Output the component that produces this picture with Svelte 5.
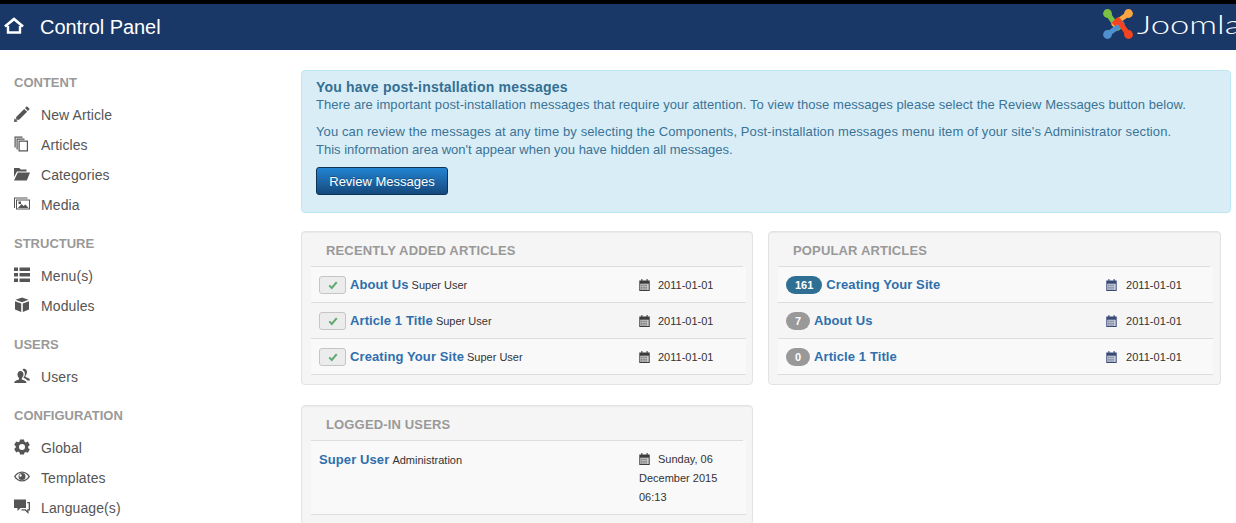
<script lang="ts">
  const recent = [
    { title: 'About Us', date: '2011-01-01' },
    { title: 'Article 1 Title', date: '2011-01-01' },
    { title: 'Creating Your Site', date: '2011-01-01' }
  ];

  const popular = [
    { hits: 161, title: 'Creating Your Site', date: '2011-01-01', hot: true },
    { hits: 7, title: 'About Us', date: '2011-01-01', hot: false },
    { hits: 0, title: 'Article 1 Title', date: '2011-01-01', hot: false }
  ];

  const menu = [
    {
      heading: 'CONTENT',
      items: [
        { label: 'New Article', icon: 'pencil' },
        { label: 'Articles', icon: 'copy' },
        { label: 'Categories', icon: 'folder' },
        { label: 'Media', icon: 'image' }
      ]
    },
    {
      heading: 'STRUCTURE',
      items: [
        { label: 'Menu(s)', icon: 'list' },
        { label: 'Modules', icon: 'cube' }
      ]
    },
    {
      heading: 'USERS',
      items: [{ label: 'Users', icon: 'users' }]
    },
    {
      heading: 'CONFIGURATION',
      items: [
        { label: 'Global', icon: 'cog' },
        { label: 'Templates', icon: 'eye' },
        { label: 'Language(s)', icon: 'comments' }
      ]
    }
  ];

  // one link of the logo, rotated four times round the centre
  const logoLinks = [
    { color: '#7ac143', angle: 0 },
    { color: '#f9a541', angle: 90 },
    { color: '#5091cd', angle: 270 },
    { color: '#f44321', angle: 180 }
  ];
</script>

{#snippet calendar(color)}
  <svg class="cal" viewBox="1 0.5 10 11.5" width="11" height="12" fill={color}>
    <path d="M1 2h2V.5h1V2h4V.5h1V2h2v10H1zM2 5v6h8V5z" />
    <path d="M3 6h1v1H3zM5 6h1v1H5zM7 6h1v1H7zM3 8h1v1H3zM5 8h1v1H5zM7 8h1v1H7zM3 9.600h1v1H3zM5 9.600h1v1H5zM7 9.600h1v1H7z" />
    <path d="M2 5h8v6H2z" opacity=".25" />
  </svg>
{/snippet}

{#snippet navIcon(name)}
  <svg class="nav-icon" viewBox="0 0 16 16" width="16" height="16" fill="#555">
    {#if name === 'pencil'}
      <path d="M12.900 0.300l2.800 2.800-1.800 1.900-2.900-2.900zM10.200 2.900l2.900 2.900-8 8-3-.1.100-2.800zM.600 12.200l3.200 3.200-3.900 .6z" />
    {:else if name === 'copy'}
      <path d="M.500.500h8v1.200H1.700v9.800H.500zM2.500 2.500h8v1.200H3.700v9.800H2.500z" />
      <path fill-rule="evenodd" d="M4.500 4.500h9.500v11H4.500zM5.700 5.700v8.600h7.100V5.700z" />
    {:else if name === 'folder'}
      <path d="M0 2h5.500l1 1.500h6V5.500H3L0 11zM3.800 6.500H16l-3.200 8H0z" />
    {:else if name === 'image'}
      <path fill-rule="evenodd" d="M0 1.500h13.500v1H1v9.500H0zM2 3.500h14v10H2zM3 4.500v8h12v-8z" />
      <path d="M4 12l3.500-4 2 2 2-1.500 3 3.500zM4.500 5.500h2.500v2.500H4.500z" />
    {:else if name === 'list'}
      <path d="M0 0.500h4v3.500H0zM5.500 0.500H16v3.500H5.500zM0 6h4v3.500H0zM5.500 6H16v3.500H5.500zM0 11.500h4V15H0zM5.500 11.500H16V15H5.500z" />
    {:else if name === 'cube'}
      <path d="M8 0.500l6.500 2.300L8 5.200 1.500 2.800zM1 4.200l6.200 2.300V15L1 12.500zM15 4.200L8.800 6.500V15L15 12.500z" />
    {:else if name === 'users'}
      <path d="M6.500 3c1.800 0 3 1.400 3 3.200 0 1.500-.7 3-1.700 3.800v1.400c2 .7 4.700 1.200 4.700 3.600H.3c0-2.400 2.700-2.900 4.700-3.600V10C4 9.200 3.500 7.700 3.500 6.200 3.500 4.400 4.700 3 6.500 3z" />
      <path d="M10 .800c1.800 0 3 1.400 3 3.200 0 1.500-.6 2.900-1.500 3.700v1.200c1.800.7 4.500 1.200 4.500 3.600h-2.800c-.8-1.600-2.600-2.200-3.700-2.600v-.4c.9-.9 1.400-2.300 1.400-3.500 0-1.900-.8-3.400-2.300-4.100C8.900 1.100 9.400.800 10 .800z" />
    {:else if name === 'cog'}
      <path fill-rule="evenodd" d="M6 .500h4l.4 2.100 1.400.8 2-.8 2 3.400-1.600 1.400v1.600l1.600 1.400-2 3.400-2-.8-1.400.8L10 15.500H6l-.4-2.100-1.400-.8-2 .8-2-3.400 1.600-1.400V7.200L.200 5.800l2-3.400 2 .8 1.400-.8zM8 5a3 3 0 1 0 0 6 3 3 0 0 0 0-6z" />
    {:else if name === 'eye'}
      <path fill-rule="evenodd" d="M8 2.500c3.500 0 6.500 2.200 8 5-1.500 2.900-4.500 5-8 5s-6.500-2.100-8-5c1.500-2.800 4.500-5 8-5zM8 3.800c-2.700 0-5.100 1.500-6.400 3.700C2.900 9.700 5.300 11.300 8 11.300s5.100-1.600 6.400-3.800C13.100 5.300 10.700 3.800 8 3.800z" />
      <path fill-rule="evenodd" d="M8 4a3.500 3.500 0 1 1 0 7 3.500 3.500 0 0 1 0-7zM6.500 5.300a1.200 1.200 0 1 0 0 2.400 1.200 1.200 0 0 0 0-2.400z" />
    {:else if name === 'comments'}
      <path d="M0 0.500h12v8.500H6.500L3.500 12V9H0z" />
      <path d="M13.200 3H16v8.500h-1.500V15L11 11.500H7.500V10.200h4.200l1.500 1.500V10.200h1.500V4.300h-1.500z" />
    {/if}
  </svg>
{/snippet}

<header class="topbar">
  <div class="title">
    <svg class="home" viewBox="0 0 20 17" width="20" height="17" fill="none" stroke="#fff">
      <path d="M1 9.500 10 2l9 7.500" stroke-width="2.800" />
      <path d="M4 9V15.500H16V9" stroke-width="2.400" />
    </svg>
    <span>Control Panel</span>
  </div>
  <div class="brand">
    <svg viewBox="0 0 30 30" width="30" height="30" fill="none" stroke-width="5.200" stroke-linejoin="round">
      {#each logoLinks as link}
        <g transform="rotate({link.angle} 15 15)" stroke={link.color}>
          <path d="M5 5 15 19 19.500 14.500" />
          <circle cx="4.500" cy="4.500" r="4.400" fill={link.color} stroke="none" />
        </g>
      {/each}
    </svg>
    <span class="wordmark">Joomla</span>
  </div>
</header>

<div class="page">
  <nav class="sidebar">
    {#each menu as group}
      <h4>{group.heading}</h4>
      <ul>
        {#each group.items as item}
          <li>{@render navIcon(item.icon)}<span>{item.label}</span></li>
        {/each}
      </ul>
    {/each}
  </nav>

  <main class="content">
    <section class="alert">
      <h4>You have post-installation messages</h4>
      <p>There are important post-installation messages that require your attention. To view those messages please select the Review Messages button below.</p>
      <p class="second"><span class="wide">You can review the messages at any time by selecting the Components, Post-installation messages menu item of your site's Administrator section.</span><br /><span class="tight">This information area won't appear when you have hidden all messages.</span></p>
      <button>Review Messages</button>
    </section>

    <div class="panels">
      <section class="well">
        <h2>RECENTLY ADDED ARTICLES</h2>
        {#each recent as row}
          <div class="row striped">
            <div class="main">
              <span class="check">
                <svg viewBox="0 0 12 12" width="10" height="10" fill="none" stroke="#62a971" stroke-width="2.400"><path d="M1.500 6.500l3 3 6-7" /></svg>
              </span>
              <a href="#top">{row.title}</a>
              <small>Super User</small>
            </div>
            <div class="date">{@render calendar('#3d3d3d')}<span>{row.date}</span></div>
          </div>
        {/each}
      </section>

      <section class="well">
        <h2>POPULAR ARTICLES</h2>
        {#each popular as row}
          <div class="row striped popular">
            <div class="main">
              <span class="badge" class:hot={row.hot}>{row.hits}</span>
              <a href="#top">{row.title}</a>
            </div>
            <div class="date">{@render calendar('#3a4a78')}<span>{row.date}</span></div>
          </div>
        {/each}
      </section>

      <section class="well">
        <h2>LOGGED-IN USERS</h2>
        <div class="row tall">
          <div class="main">
            <a href="#top">Super User</a>
            <small>Administration</small>
          </div>
          <div class="date wrap">{@render calendar('#3d3d3d')}<span>Sunday, 06 December 2015 06:13</span></div>
        </div>
      </section>
    </div>
  </main>
</div>

<style>
  :global(body) {
    margin: 0;
    background: #fff;
    font-family: "Liberation Sans", Arial, sans-serif;
    font-size: 13px;
    color: #333;
    overflow: hidden;
  }

  /* top bar */
  .topbar {
    height: 46px;
    border-top: 4px solid #000;
    background: #1a3867;
    display: flex;
    justify-content: space-between;
    align-items: center;
    overflow: hidden;
  }

  .title {
    display: flex;
    align-items: center;
    gap: 16px;
    padding-left: 4px;
    color: #fff;
    font-size: 20px;
    letter-spacing: -0.05px;
  }

  .home {
    margin-top: -3px;
  }

  .brand {
    width: 133px;
    margin-bottom: 6px;
    display: flex;
    align-items: center;
    gap: 4px;
    overflow: hidden;
  }

  .brand svg {
    flex: none;
  }

  .wordmark {
    color: #fff;
    font-family: "Lato", sans-serif;
    font-weight: 300;
    font-size: 26px;
    line-height: 1;
    transform: scaleX(1.33);
    transform-origin: left center;
  }

  .page {
    display: grid;
    grid-template-columns: 301px 930px;
    height: 473px;
    overflow: hidden;
  }

  /* sidebar */
  .sidebar {
    padding: 26px 0 0 14px;
  }

  .sidebar h4 {
    margin: 0;
    font-size: 13px;
    line-height: 14px;
    font-weight: 700;
    color: #999;
  }

  .sidebar ul {
    list-style: none;
    margin: 10px 0 17px;
    padding: 0;
  }

  .sidebar li {
    height: 30px;
    display: flex;
    align-items: center;
    gap: 11px;
    font-size: 14px;
    color: #555;
    letter-spacing: 0.1px;
  }

  .nav-icon {
    flex: none;
    margin-top: -3px;
  }

  /* main column */
  .content {
    padding-top: 20px;
  }

  .alert {
    height: 143px;
    box-sizing: border-box;
    padding: 8px 14px;
    background: #d9edf7;
    border: 1px solid #bce8f1;
    border-radius: 4px;
    color: #3a7396;
  }

  .alert h4 {
    margin: 0;
    font-size: 14px;
    line-height: 17px;
    color: #336f92;
    letter-spacing: 0.2px;
  }

  .alert p {
    margin: 0;
    line-height: 18px;
    font-size: 13px;
    letter-spacing: 0.055px;
  }

  .alert .second {
    margin-top: 9px;
  }

  .alert .wide {
    letter-spacing: 0.1px;
  }

  .alert .tight {
    letter-spacing: 0;
  }

  .alert button {
    display: block;
    margin-top: 8px;
    width: 132px;
    height: 28px;
    padding: 0;
    color: #fff;
    font: 13px "Liberation Sans", Arial, sans-serif;
    background: linear-gradient(#2384d3, #15497c);
    border: 1px solid #0e3356;
    border-radius: 3px;
    text-shadow: 0 -1px 0 rgba(0, 0, 0, 0.25);
  }

  .panels {
    display: grid;
    grid-template-columns: 452px 453px;
    column-gap: 15px;
    row-gap: 20px;
    margin-top: 18px;
    align-items: start;
  }

  .well {
    background: #f5f5f5;
    border: 1px solid #e3e3e3;
    border-radius: 4px;
    padding: 0 6px 9px 9px;
    box-shadow: inset 0 1px 1px rgba(0, 0, 0, 0.05);
  }

  .well h2 {
    margin: 0;
    width: 432px;
    height: 35px;
    box-sizing: border-box;
    padding: 11px 0 0 15px;
    border-bottom: 1px solid #ddd;
    font-size: 13px;
    line-height: 15px;
    font-weight: 700;
    color: #999;
    letter-spacing: 0.15px;
  }

  .row {
    display: flex;
    width: 435px;
    height: 36px;
    box-sizing: border-box;
    padding-left: 8px;
    align-items: center;
    background: #f9f9f9;
    border-bottom: 1px solid #ddd;
  }

  .row.striped:nth-of-type(even) {
    background: #f5f5f5;
  }

  .row.tall {
    height: 74px;
    align-items: flex-start;
    padding-top: 9px;
  }

  .main {
    width: 320px;
    display: flex;
    align-items: center;
    gap: 3px;
    flex: none;
  }

  .row.tall .main {
    margin-top: 2px;
  }

  .main a {
    color: #2f6fad;
    font-size: 13px;
    font-weight: 700;
    text-decoration: none;
    letter-spacing: 0.1px;
  }

  .main small {
    color: #333;
    font-size: 11px;
  }

  .check {
    width: 25px;
    height: 16px;
    margin-right: 1px;
    display: flex;
    align-items: center;
    justify-content: center;
    background: #ececec;
    border: 1px solid #c5c5c5;
    border-radius: 3px;
  }

  .badge {
    min-width: 12px;
    height: 18px;
    margin-right: 1px;
    padding: 0 6px;
    display: flex;
    align-items: center;
    justify-content: center;
    border-radius: 9px;
    background: #999;
    color: #fff;
    font-size: 11px;
    font-weight: 700;
  }

  .badge.hot {
    background: #2f6f94;
    padding: 0 9px;
  }

  .date {
    margin-top: 1px;
    display: flex;
    align-items: center;
    font-size: 11px;
    line-height: 19px;
    color: #333;
  }

  .row.popular .date {
    letter-spacing: 0.05px;
  }

  .cal {
    margin-right: 8px;
    flex: none;
  }

  .row.popular .cal {
    margin-right: 9px;
  }

  .date.wrap {
    display: block;
    width: 90px;
    margin-top: 0;
  }

  .date.wrap .cal {
    vertical-align: -2px;
  }
</style>
